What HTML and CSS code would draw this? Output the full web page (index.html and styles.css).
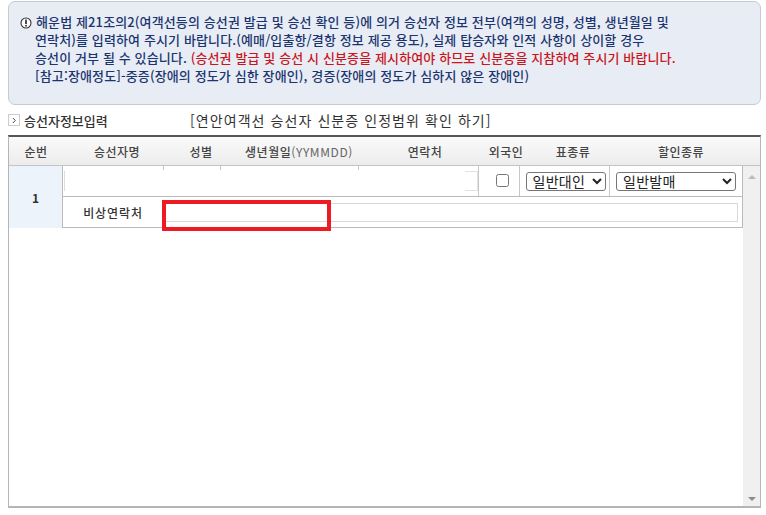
FILE: index.html
```html
<!DOCTYPE html>
<html lang="ko">
<head>
<meta charset="utf-8">
<title>승선자정보입력</title>
<link rel="stylesheet" href="styles.css">
</head>
<body>
<section class="notice">
  <p class="notice-line first"><svg class="alert" viewBox="0 0 12 12" width="12" height="12"><circle cx="6" cy="6" r="5" fill="#fff" stroke="#333" stroke-width="1.1"/><rect x="5.2" y="2.6" width="1.6" height="4.4" fill="#222"/><rect x="5.2" y="7.9" width="1.6" height="1.6" fill="#222"/></svg>해운법 제21조의2(여객선등의 승선권 발급 및 승선 확인 등)에 의거 승선자 정보 전부(여객의 성명, 성별, 생년월일 및</p>
  <p class="notice-line">연락처)를 입력하여 주시기 바랍니다.(예매/입출항/결항 정보 제공 용도), 실제 탑승자와 인적 사항이 상이할 경우</p>
  <p class="notice-line">승선이 거부 될 수 있습니다. <span class="warn">(승선권 발급 및 승선 시 신분증을 제시하여야 하므로 신분증을 지참하여 주시기 바랍니다.</span></p>
  <p class="notice-line">[참고:장애정도]-중증(장애의 정도가 심한 장애인), 경증(장애의 정도가 심하지 않은 장애인)</p>
</section>

<div class="title-row">
  <h2 class="title"><span class="bullet"><svg viewBox="0 0 6 8" width="5" height="7"><path d="M1 1l3 3-3 3" fill="none" stroke="#444" stroke-width="1.2"/></svg></span>승선자정보입력</h2>
  <span class="title-link">[연안여객선 승선자 신분증 인정범위 확인 하기]</span>
</div>

<div class="panel">
  <div class="head">
    <span class="h h-no">순번</span>
    <span class="h h-name">승선자명</span>
    <span class="h h-sex">성별</span>
    <span class="h h-birth">생년월일<span class="thin">(YYMMDD)</span></span>
    <span class="h h-tel">연락처</span>
    <span class="h h-for">외국인</span>
    <span class="h h-ticket">표종류</span>
    <span class="h h-disc">할인종류</span>
  </div>
  <div class="body">
    <div class="rows">
      <div class="no">1</div>
      <div class="row-main">
        <div class="c c-name"><span class="stub-left"></span></div>
        <div class="c c-sex"></div>
        <div class="c c-birth"></div>
        <div class="c c-tel"><span class="stub-right"></span></div>
        <div class="c c-for"><input type="checkbox" class="check" aria-label="외국인"></div>
        <div class="c c-ticket"><select class="sel sel-ticket"><option>일반대인</option></select></div>
        <div class="c c-disc"><select class="sel sel-disc"><option>일반발매</option></select></div>
      </div>
      <div class="row-sub">
        <div class="sub-label">비상연락처</div>
        <div class="sub-field"><input type="text" class="sub-input" aria-label="비상연락처"></div>
      </div>
      <div class="highlight"></div>
    </div>
    <div class="scrollbar">
      <span class="arrow up"></span>
      <span class="arrow down"></span>
    </div>
  </div>
</div>
</body>
</html>
```

FILE: styles.css
```css
* { box-sizing: border-box; }
html, body { margin: 0; padding: 0; background: #fff; }
body {
  width: 766px;
  height: 515px;
  overflow: hidden;
  padding: 1px 5px 0 8px;
  font-family: "Noto Sans CJK KR", "Noto Sans", sans-serif;
  color: #333;
}
.notice {
  height: 104px;
  padding: 11px 10px 0 11px;
  background: #e8edf5;
  border: 1px solid #c5cbd3;
  border-radius: 7px;
}
.notice-line {
  margin: 0;
  padding-left: 15px;
  font-size: 13px;
  line-height: 18px;
  font-weight: 500;
  letter-spacing: 0.12px;
  color: #1c3570;
  white-space: nowrap;
}
.notice-line.first { padding-left: 0; }
.alert { margin-right: 4px; vertical-align: -2px; }
.warn { color: #c8161d; }
.title-row {
  display: flex;
  align-items: center;
  height: 30px;
  color: #333;
}
.title {
  display: flex;
  align-items: center;
  width: 182px;
  margin: 0;
  font-size: 13px;
  font-weight: 500;
  color: #333;
}
.bullet {
  display: flex;
  align-items: center;
  justify-content: center;
  width: 12px;
  height: 12px;
  margin-right: 4px;
  border: 1px solid #ccc;
}
.title-link { font-size: 14px; letter-spacing: 1.07px; }
.panel {
  position: relative;
  height: 373px;
  border-top: 2px solid #555;
  border-left: 1px solid #b5b5b5;
  border-right: 1px solid #b5b5b5;
  border-bottom: 2px solid #b5b5b5;
  display: flex;
  flex-direction: column;
}
.head {
  display: flex;
  height: 29px;
  flex: none;
  align-items: center;
  background: linear-gradient(#fafafa, #ececec);
  border-bottom: 1px solid #c4c4c4;
}
.h {
  text-align: center;
  font-size: 12px;
  font-weight: 500;
  color: #444;
  letter-spacing: 0.5px;
  white-space: nowrap;
}
.thin { font-weight: 400; color: #666; letter-spacing: 0.6px; }
.h-no { width: 54px; }
.h-name { width: 108px; }
.h-sex { width: 60px; }
.h-birth { width: 136px; }
.h-tel { width: 116px; }
.h-for { width: 46px; }
.h-ticket { width: 88px; }
.h-disc { width: 128px; }
.body { flex: 1; display: flex; min-height: 0; }
.rows {
  position: relative;
  width: 734px;
  height: 62px;
  flex: none;
  display: grid;
  grid-template-columns: 54px 1fr;
  grid-template-rows: 31px 31px;
  border-right: 1px solid #bbb;
  border-bottom: 1px solid #bbb;
}
.no {
  grid-row: 1 / 3;
  display: flex;
  align-items: center;
  justify-content: center;
  background: #edf3fa;
  border-right: 1px solid #bbb;
  font-size: 12px;
  font-weight: 700;
  color: #333;
}
.row-main { display: flex; border-bottom: 1px solid #bbb; }
.c { display: flex; align-items: center; height: 100%; position: relative; }
.c-name { width: 100px; padding-left: 1px; }
.c-sex { width: 57px; }
.c-birth { width: 138px; }
.c-tel { width: 121px; justify-content: flex-end; border-right: 1px solid #c8c8c8; }
.c-for { width: 41px; justify-content: center; padding: 0 0 2px 6px; border-right: 1px solid #c8c8c8; }
.c-ticket { width: 90px; justify-content: center; padding-left: 2px; border-right: 1px solid #c8c8c8; }
.c-disc { flex: 1; justify-content: center; }
.c-sex::before, .c-birth::before, .c-tel::before {
  content: "";
  position: absolute;
  left: 0;
  top: 0;
  width: 1px;
  height: 4px;
  background: #c8c8c8;
}
.stub-left {
  display: block;
  width: 1px;
  height: 20px;
  background: #ddd;
}
.stub-right {
  display: block;
  width: 13px;
  height: 20px;
  border: 1px solid #e2e2e2;
  border-left: none;
}
.check { width: 13px; height: 13px; margin: 0; }
.sel {
  height: 19px;
  padding: 0 0 0 2px;
  background: #fff;
  border: 1px solid #767676;
  border-radius: 3px;
  font-family: "Liberation Sans", "Noto Sans CJK KR", sans-serif;
  font-size: 14px;
  letter-spacing: 0.3px;
  color: #222;
}
.sel-ticket { width: 80px; }
.sel-disc { width: 120px; }
.row-sub { display: flex; align-items: center; }
.sub-label {
  width: 100px;
  text-align: center;
  font-size: 12px;
  font-weight: 500;
  color: #333;
  letter-spacing: 0.9px;
}
.sub-field { flex: 1; display: flex; padding: 0 4px 0 2px; }
.sub-input {
  width: 100%;
  height: 19px;
  padding: 0;
  border: 1px solid #d8d8d8;
  background: #fff;
}
.highlight {
  position: absolute;
  left: 153px;
  top: 34px;
  width: 169px;
  height: 31px;
  border: 4.5px solid #ed1c24;
}
.scrollbar {
  flex: 1;
  display: flex;
  flex-direction: column;
  justify-content: space-between;
  align-items: center;
  padding: 9px 0 5px;
  background: #f0f0f0;
}
.arrow { width: 0; height: 0; border-left: 4px solid transparent; border-right: 4px solid transparent; }
.arrow.up { border-bottom: 4px solid #bbb; }
.arrow.down { border-top: 4px solid #8a8a8a; }
```
